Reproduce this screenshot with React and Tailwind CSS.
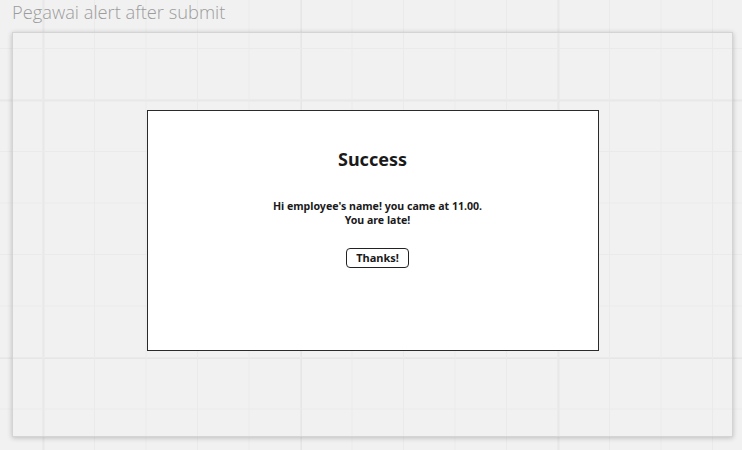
export default function App() {
  return (
    <div className="relative w-[742px] h-[450px] overflow-hidden bg-[#f1f1f1]">
      <div className="absolute inset-0 bg-[linear-gradient(to_right,#e6e6e6_1.5px,transparent_1.5px),linear-gradient(to_bottom,#e6e6e6_1.5px,transparent_1.5px)] bg-[length:257.5px_257.5px] bg-[position:42.5px_99.5px]" />
      <div className="absolute inset-0 bg-[linear-gradient(to_right,#eaeaea_1px,transparent_1px),linear-gradient(to_bottom,#eaeaea_1px,transparent_1px)] bg-[length:51.5px_51.5px] bg-[position:42.5px_99.5px]" />
      <div className="relative flex flex-col">
        <div className="pl-3 pt-[0px] h-[32px] text-[18.3px] leading-[24px] font-light text-[#9c9c9c] font-['Open_Sans',sans-serif]">
          Pegawai alert after submit
        </div>
        <div className="ml-3 w-[721px] h-[405px] border border-[#d4d4d4] shadow-[0_1px_5px_rgba(0,0,0,0.22)] flex flex-col items-center pt-[77px]">
          <div className="w-[452px] h-[241px] bg-white border border-[#2a2a2a] flex flex-col items-center pt-[37px] font-['Noto_Sans',sans-serif] text-[#1a1a1a]">
            <div className="text-[18px] leading-[22px] font-bold">Success</div>
            <div className="mt-[30px] ml-[10px] text-[10.6px] leading-[13.5px] font-bold text-center">
              Hi employee's name! you came at 11.00.
              <br />
              You are late!
            </div>
            <div className="mt-[21px] ml-[10px] h-[20px] px-[9px] border border-[#222] rounded-[4px] text-[11px] leading-[18px] font-bold">
              Thanks!
            </div>
          </div>
        </div>
      </div>
    </div>
  );
}
